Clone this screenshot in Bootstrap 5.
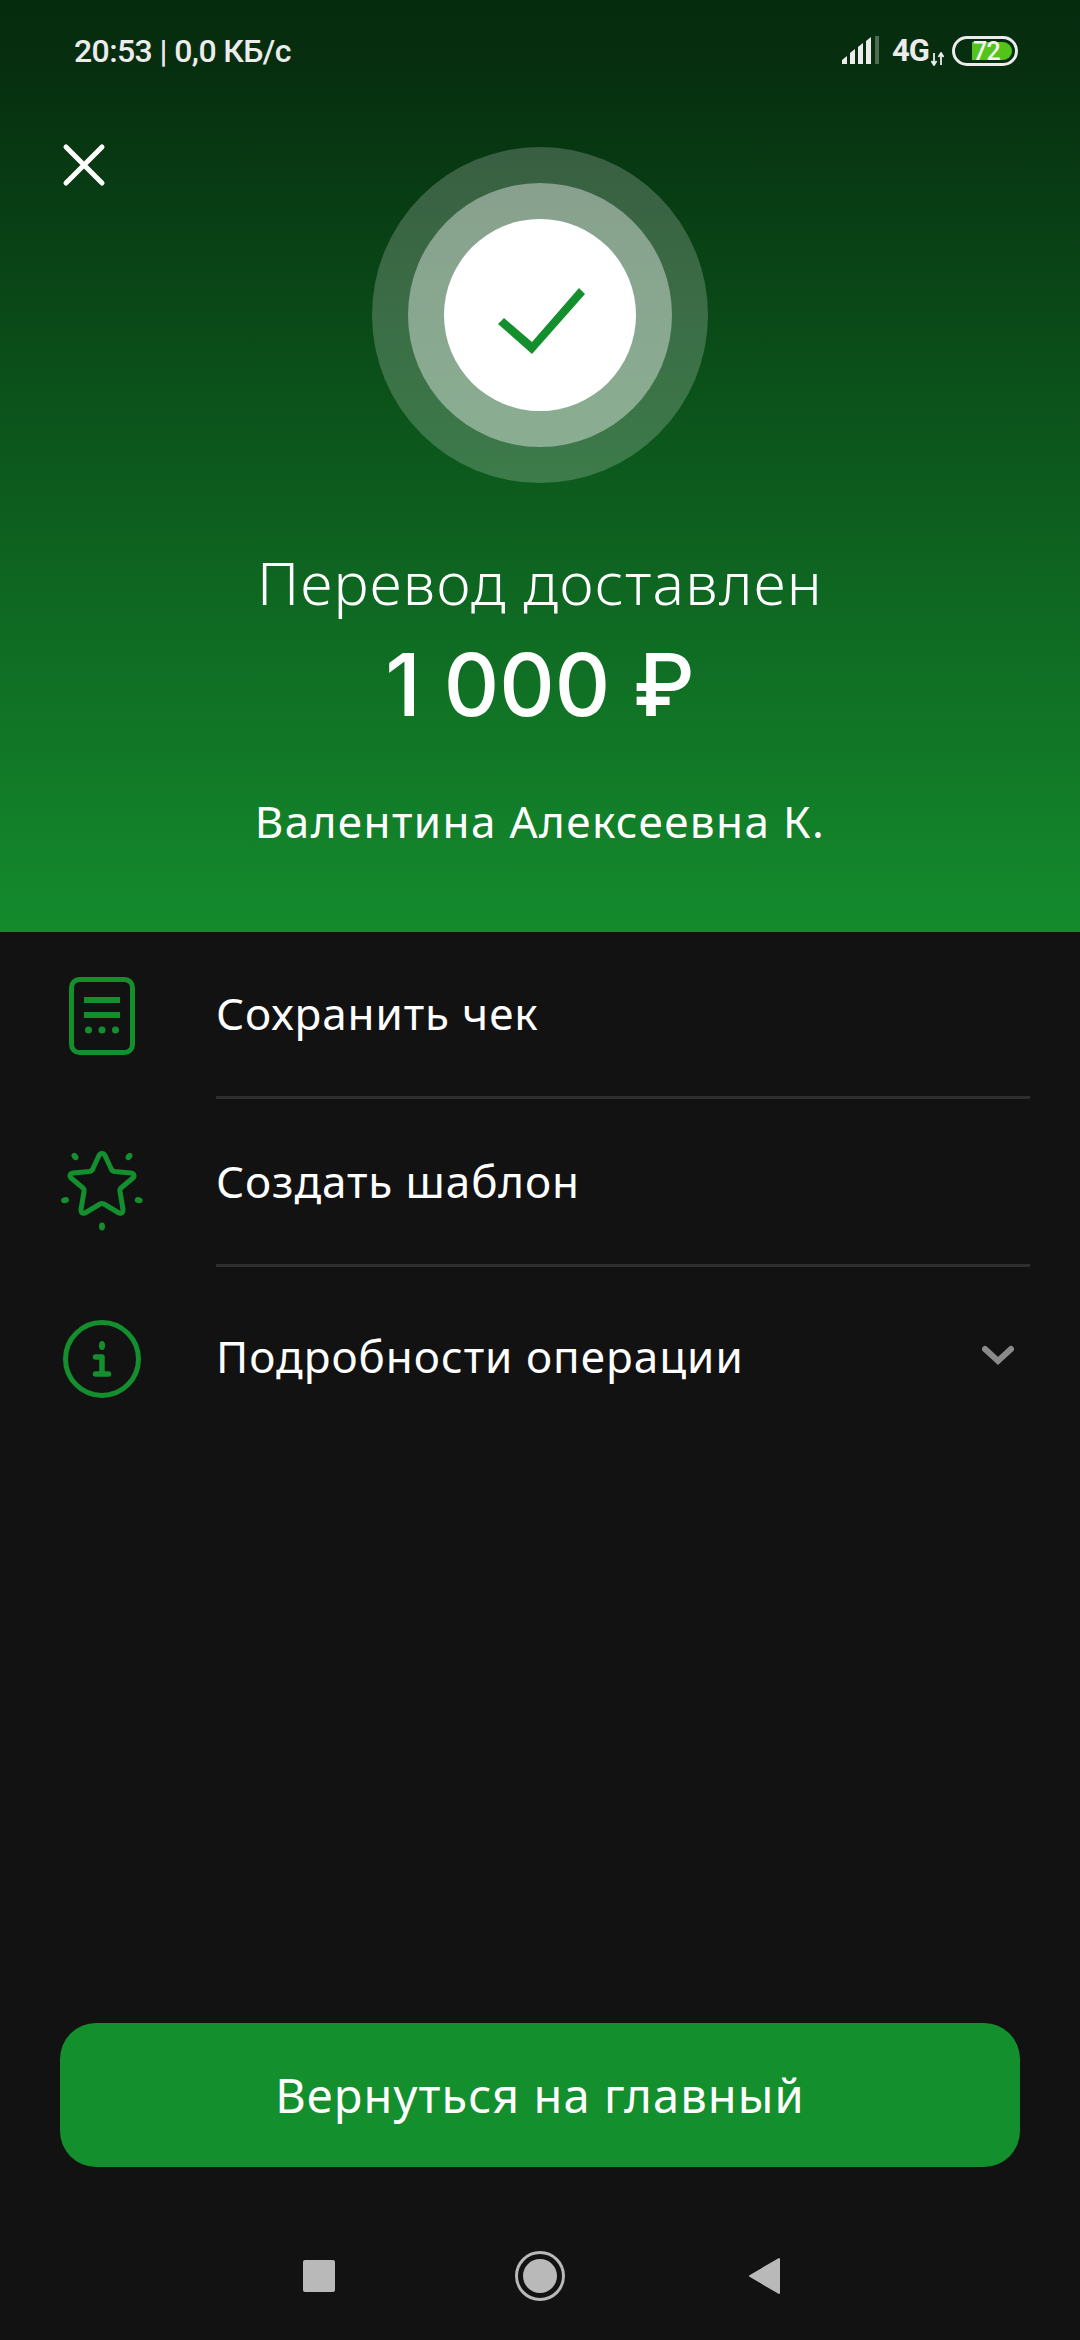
<!DOCTYPE html>
<html lang="ru">
<head>
  <meta charset="UTF-8" />
  <meta name="viewport" content="width=device-width, initial-scale=1" />
  <title>Перевод доставлен</title>
  <link href="https://cdn.jsdelivr.net/npm/bootstrap@5.3.3/dist/css/bootstrap.min.css" rel="stylesheet" />
  <style>
    body {
      background-color: #121212;
      color: #fff;
      font-family: "Noto Sans", "Open Sans", sans-serif;
    }
    .page-wrap { height: 2340px; }
    .hero {
      height: 932px;
      background: linear-gradient(180deg, #062c0e 0, #062e0f 60px, #148b2d 932px);
    }
    .status-bar {
      height: 102px;
      padding: 0 62px 0 74px;
      font-family: Roboto, sans-serif;
      font-weight: 500;
      font-size: 32px;
      letter-spacing: -.6px;
      color: #ececec;
    }
    .status-net { font-size: 31px; font-weight: 700; margin: 0 2px 0 10px; letter-spacing: -1px; }
    .close-btn { left: 62px; top: 143px; }
    .rings { width: 336px; height: 336px; margin-top: 45px; background: rgba(255,255,255,.2); }
    .ring-mid { width: 264px; height: 264px; background: rgba(255,255,255,.4); }
    .ring-in { width: 192px; height: 192px; background: #fff; }
    .hero-title { font-size: 59px; font-weight: 350; line-height: 70px; margin-top: 64px; letter-spacing: 1.3px; }
    .hero-sum { font-family: Inter, "Noto Sans", sans-serif; font-size: 86px; font-weight: 500; line-height: 100px; margin-top: 18px; }
    .hero-name { font-size: 44px; line-height: 56px; margin-top: 58px; letter-spacing: 1.4px; }
    .op-row { padding-left: 52px; padding-right: 50px; }
    .op-icon { width: 100px; margin-right: 64px; }
    .op-body { font-size: 44px; letter-spacing: .9px; padding-bottom: 2px; border-bottom: 3px solid #2e2e2e; }
    .op-1 { height: 167px; }
    .op-2 { height: 168px; }
    .op-3 { height: 184px; }
    .op-3 .op-body { border-bottom: 0; padding-bottom: 6px; letter-spacing: 1px; }
    .chevron { margin-right: 16px; margin-bottom: 1px; }
    .btn-home {
      height: 144px;
      margin: 0 60px;
      border-radius: 36px;
      background: #148f2e;
      border: 0;
      color: #fff;
      font-size: 47px;
      letter-spacing: 1.1px;
    }
    .btn-home:hover { background: #148f2e; color: #fff; }
    .sys-nav { height: 173px; padding-left: 303px; padding-top: 44px; }
    .sys-nav svg + svg { margin-left: 180px; }
    .sys-nav svg:last-child { margin-left: 183px; }
  </style>
</head>
<body>
  <div class="page-wrap d-flex flex-column">
    <div class="hero position-relative d-flex flex-column align-items-center text-center">
      <div class="status-bar w-100 d-flex align-items-center justify-content-between">
        <span>20:53 | 0,0 КБ/с</span>
        <span class="d-flex align-items-center">
          <svg width="40" height="30" viewBox="0 0 40 30">
            <path fill="#ececec" d="M0 28V24L5 20V28ZM8 28V17L13 13V28ZM16 28V11L21 7V28ZM24 28V5L29 1V28Z"/>
            <path fill="#4f6b52" d="M33 28V0L37 -2V28Z"/>
          </svg>
          <span class="status-net">4G</span>
          <svg width="13" height="14" viewBox="0 0 13 14" class="align-self-end mb-2">
            <path fill="none" stroke="#ececec" stroke-width="1.800" d="M3 1V12M0.500 9L3 13L5.500 9M10 13V2M7.500 5L10 1L12.500 5"/>
          </svg>
          <svg width="66" height="30" viewBox="0 0 66 30" class="ms-2">
            <rect x="1.5" y="1.5" width="63" height="27" rx="13.5" fill="none" stroke="#ececec" stroke-width="3"/>
            <path fill="#52c41a" d="M20 6H51A9 9 0 0 1 51 24H20Z"/>
            <text x="21" y="24" font-family="Roboto, sans-serif" font-weight="500" font-size="25" fill="#f2f2f2">72</text>
          </svg>
        </span>
      </div>

      <svg class="close-btn position-absolute" width="44" height="44" viewBox="0 0 44 44">
        <path fill="none" stroke="#fff" stroke-width="5" stroke-linecap="round" d="M4 4L40 40M40 4L4 40"/>
      </svg>

      <div class="rings rounded-circle d-flex align-items-center justify-content-center">
        <div class="ring-mid rounded-circle d-flex align-items-center justify-content-center">
          <div class="ring-in rounded-circle d-flex align-items-center justify-content-center">
            <svg width="192" height="192" viewBox="0 0 192 192">
              <path fill="#148f2e" d="M54 105L60 99L88 123L135 69L141 75L88 135Z" />
            </svg>
          </div>
        </div>
      </div>

      <div class="hero-title">Перевод доставлен</div>
      <div class="hero-sum">1 000 ₽</div>
      <div class="hero-name">Валентина Алексеевна К.</div>
    </div>

    <div class="op-row op-1 d-flex align-items-stretch">
      <div class="op-icon flex-shrink-0 d-flex align-items-center justify-content-center">
        <svg width="70" height="82" viewBox="0 0 70 82">
          <rect x="4.500" y="4.500" width="61" height="73" rx="8" fill="none" stroke="#148f2e" stroke-width="5"/>
          <path fill="#148f2e" d="M17 22H53V28H17ZM17 37H53V43H17Z"/>
          <circle cx="21.500" cy="55" r="3.500" fill="#148f2e"/>
          <circle cx="35" cy="55" r="3.500" fill="#148f2e"/>
          <circle cx="48.500" cy="55" r="3.500" fill="#148f2e"/>
        </svg>
      </div>
      <div class="op-body flex-grow-1 d-flex align-items-center">Сохранить чек</div>
    </div>

    <div class="op-row op-2 d-flex align-items-stretch">
      <div class="op-icon flex-shrink-0 d-flex align-items-center justify-content-center">
        <svg width="84" height="96" viewBox="0 0 84 96">
          <g transform="translate(0 6.500)" fill="#148f2e">
            <path fill="none" stroke="#148f2e" stroke-width="5" stroke-linejoin="round" d="M42 12Q44.500 12 45.500 15L51 27Q52 29.500 54.500 30L71 31.500Q75.500 32.500 73.500 36L61 46.500Q59.500 48 60 50L63 68Q63 73 59 71.500L44 62.500Q42 61.500 40 62.500L25 71.500Q21 73 21 68L24 50Q24.500 48 23 46.500L10.500 36Q8.500 32.500 13 31.500L29.500 30Q32 29.500 33 27L38.500 15Q39.500 12 42 12Z"/>
            <ellipse cx="15" cy="15" rx="3" ry="4" transform="rotate(-35 15 15)"/>
            <ellipse cx="69" cy="15" rx="3" ry="4" transform="rotate(35 69 15)"/>
            <ellipse cx="5" cy="58.700" rx="4" ry="3" transform="rotate(-15 5 58.700)"/>
            <ellipse cx="78.700" cy="58.700" rx="4" ry="3" transform="rotate(15 78.700 58.700)"/>
            <ellipse cx="42" cy="85" rx="3" ry="4"/>
          </g>
        </svg>
      </div>
      <div class="op-body flex-grow-1 d-flex align-items-center">Создать шаблон</div>
    </div>

    <div class="op-row op-3 d-flex align-items-stretch">
      <div class="op-icon flex-shrink-0 d-flex align-items-center justify-content-center">
        <svg width="80" height="80" viewBox="0 0 80 80">
          <circle cx="40" cy="40" r="36.500" fill="none" stroke="#148f2e" stroke-width="5"/>
          <ellipse cx="40" cy="26.500" rx="3" ry="4.500" fill="#148f2e"/>
          <path fill="none" stroke="#148f2e" stroke-width="5.500" stroke-linecap="round" stroke-linejoin="round" d="M33.500 38H40V55M33.500 55H46.500"/>
        </svg>
      </div>
      <div class="op-body flex-grow-1 d-flex align-items-center justify-content-between">
        <span>Подробности операции</span>
        <svg class="chevron" width="32" height="22" viewBox="0 0 32 22">
          <path fill="none" stroke="#8a8a8a" stroke-width="6" stroke-linecap="round" d="M3 4L16 16L29 4"/>
        </svg>
      </div>
    </div>

    <button type="button" class="btn btn-home mt-auto">Вернуться на главный</button>

    <div class="sys-nav d-flex align-items-center">
      <svg width="32" height="32" viewBox="0 0 32 32"><rect width="32" height="32" rx="2" fill="#b9b9b9"/></svg>
      <svg width="50" height="50" viewBox="0 0 50 50">
        <circle cx="25" cy="25" r="23.500" fill="none" stroke="#b9b9b9" stroke-width="3"/>
        <circle cx="25" cy="25" r="17" fill="#b9b9b9"/>
      </svg>
      <svg width="32" height="38" viewBox="0 0 32 38"><path fill="#b9b9b9" stroke="#b9b9b9" stroke-width="2" stroke-linejoin="round" d="M2 19L31 2V36Z"/></svg>
    </div>
  </div>
  <script src="https://cdn.jsdelivr.net/npm/bootstrap@5.3.3/dist/js/bootstrap.bundle.min.js"></script>
</body>
</html>
